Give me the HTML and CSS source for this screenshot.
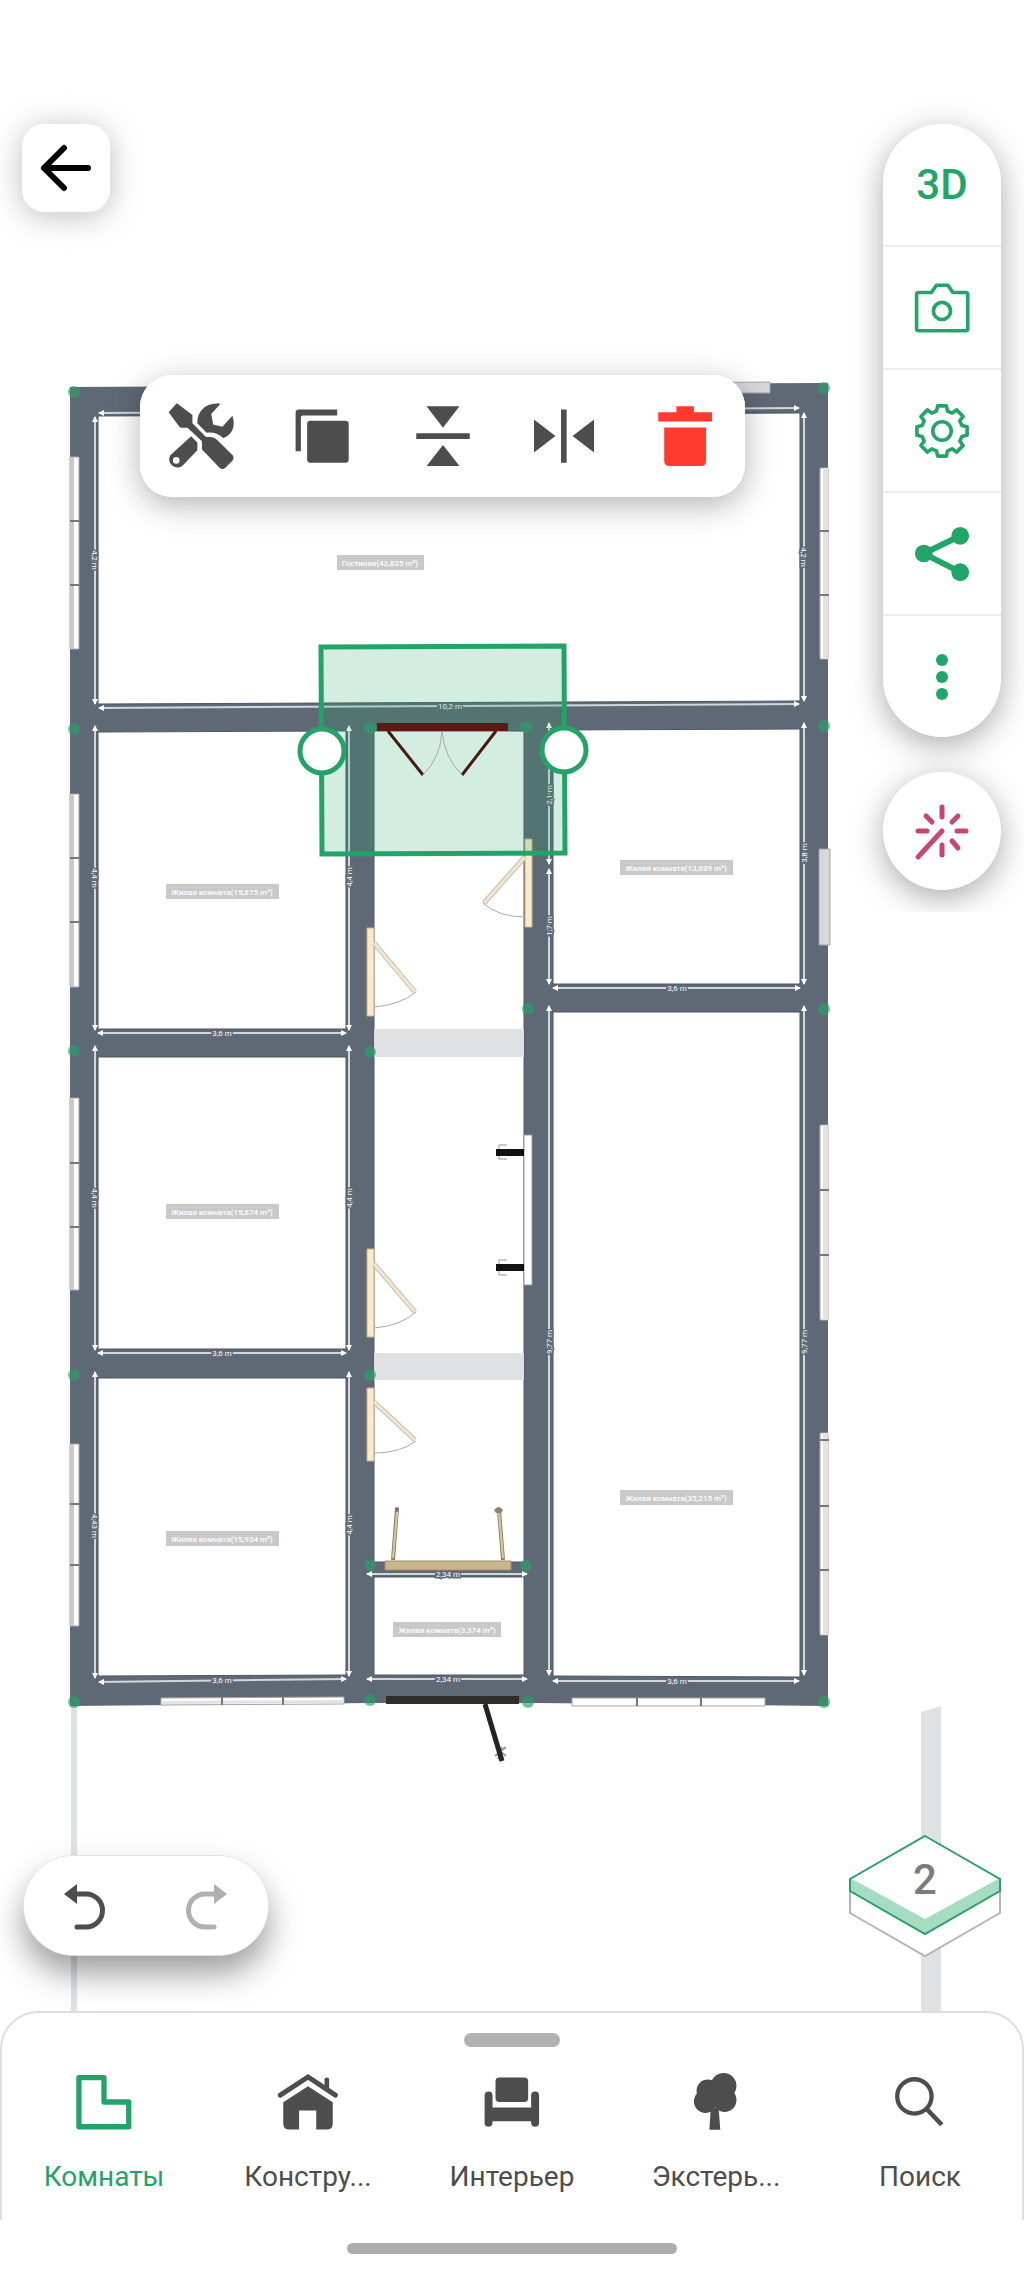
FILE: index.html
```html
<!doctype html>
<html lang="ru">
<head>
    <meta charset="utf-8"/>
    <meta name="viewport" content="width=device-width, initial-scale=1">
    <title>План этажа</title>
    <link rel="stylesheet" href="styles.css">
</head>
<body>

<div class="stage">
    <svg class="plan" viewBox="0 0 1024 2011" role="img" aria-label="План этажа">
        <defs>
            <marker id="arrow" viewBox="0 0 6 6" refX="5" refY="3" markerWidth="6" markerHeight="6" markerUnits="userSpaceOnUse" orient="auto-start-reverse">
                <path d="M0 0L6 3L0 6z" fill="#fff"/>
            </marker>
        </defs>

        <!-- lower floor -->
        <path class="ghost" d="M71 1700h6v311h-6zM921 1712l20-6v305h-20z"/>

        <!-- walls -->
        <path class="wall" d="M70 387L828 383V1706L537 1703H370L70 1706z"/>

        <!-- rooms -->
        <path class="room" d="M98 416L800 413V701L98 704z"/>
        <path class="room" d="M98 732L346 731V1029H98z"/>
        <path class="room" d="M98 1057H346V1349H98z"/>
        <path class="room" d="M98 1378H346V1675L98 1676z"/>
        <path class="room" d="M374 731H524V1562H374z"/>
        <path class="room" d="M374 1577H524V1675H374z"/>
        <path class="room" d="M553 730L800 729V984H553z"/>
        <path class="room" d="M553 1012H800V1677L553 1676z"/>
        <path class="ghost" d="M374 1029h150v28H374zM374 1353h150v27H374z"/>

        <!-- sizes -->
        <g class="dim">
            <path d="M99 413L799 408"/><path d="M95 417V704"/><path d="M804 413V701"/><path d="M99 708L799 704"/>
            <path d="M95 726V1030"/><path d="M349 726V1030"/><path d="M98 1033H346"/>
            <path d="M95 1046V1350"/><path d="M349 1046V1350"/><path d="M98 1353H346"/>
            <path d="M95 1372V1678"/><path d="M349 1372V1676"/><path d="M99 1682L346 1679"/>
            <path d="M549 723V864"/><path d="M549 869V984"/><path d="M804 723V984"/><path d="M553 988H800"/>
            <path d="M549 1006V1675"/><path d="M804 1006V1675"/><path d="M553 1681H799"/>
            <path d="M367 1574H527"/><path d="M367 1679H527"/>
        </g>
        <g class="dim-text">
            <text x="450" y="709">10,2 m</text>
            <text x="222" y="1036">3,6 m</text>
            <text x="222" y="1356">3,6 m</text>
            <text x="222" y="1683">3,6 m</text>
            <text x="677" y="991">3,6 m</text>
            <text x="677" y="1684">3,6 m</text>
            <text x="448" y="1577">2,34 m</text>
            <text x="448" y="1682">2,34 m</text>
            <text transform="translate(92 560) rotate(90)">4,2 m</text>
            <text transform="translate(801 557) rotate(90)">4,2 m</text>
            <text transform="translate(92 878) rotate(90)">4,4 m</text>
            <text transform="translate(352 877) rotate(-90)">4,4 m</text>
            <text transform="translate(92 1198) rotate(90)">4,4 m</text>
            <text transform="translate(352 1198) rotate(-90)">4,4 m</text>
            <text transform="translate(92 1526) rotate(90)">4,43 m</text>
            <text transform="translate(352 1525) rotate(-90)">4,4 m</text>
            <text transform="translate(552 795) rotate(-90)">2,1 m</text>
            <text transform="translate(552 926) rotate(-90)">1,7 m</text>
            <text transform="translate(807 853) rotate(-90)">3,8 m</text>
            <text transform="translate(552 1342) rotate(-90)">9,77 m</text>
            <text transform="translate(807 1342) rotate(-90)">9,77 m</text>
        </g>

        <!-- windows -->
        <g class="window">
            <path d="M70 457h9v192h-9zM70 794h9v193h-9zM70 1098h9v192h-9zM70 1444h9v182h-9z"/>
            <path d="M820 468h8v191h-8zM820 1125h8v195h-8zM820 1433h8v202h-8z"/>
            <path d="M161 1698l183-1v7l-183 1zM572 1698h193v8H572z"/>
        </g>
        <path class="pane" d="M70 457h4v192h-4zM70 794h4v193h-4zM70 1098h4v192h-4zM70 1444h4v182h-4z"/>
        <path class="pane-light" d="M823 468h5v191h-5zM823 1125h5v195h-5zM823 1433h5v202h-5zM161 1701l183-1v3l-183 1z"/>
        <path class="mullion" d="M70 521h9M70 585h9M70 858h9M70 922h9M70 1163h9M70 1227h9M70 1504h9M70 1565h9M820 531h9M820 595h9M820 1190h9M820 1255h9M820 1440h9M820 1506h9M820 1570h9M222 1697v8M283 1697v8M637 1698v8M701 1698v8"/>
        <path class="panel" d="M680 383l90-1v11h-90zM819 849h11v96h-11z"/>

        <!-- nodes -->
        <g class="node">
            <circle cx="74" cy="392" r="6"/><circle cx="824" cy="388" r="6"/>
            <circle cx="74" cy="729" r="6"/><circle cx="370" cy="728" r="6"/><circle cx="526" cy="727" r="6"/><circle cx="824" cy="726" r="6"/>
            <circle cx="74" cy="1051" r="6"/><circle cx="370" cy="1052" r="6"/>
            <circle cx="528" cy="1009" r="6"/><circle cx="824" cy="1009" r="6"/>
            <circle cx="74" cy="1375" r="6"/><circle cx="370" cy="1375" r="6"/>
            <circle cx="370" cy="1565" r="6"/><circle cx="526" cy="1566" r="6"/>
            <circle cx="74" cy="1702" r="6"/><circle cx="370" cy="1700" r="6"/><circle cx="528" cy="1702" r="6"/><circle cx="824" cy="1702" r="6"/>
        </g>

        <!-- inner doors -->
        <path class="door" d="M367 928h7v88h-7zM367 1249h7v88h-7zM367 1388h7v73h-7zM525 839h7v88h-7z"/>
        <path class="leaf-edge" d="M374 943l41 49M374 1264l41 48M374 1402l41 38M525 857l-41 46"/>
        <path class="leaf" d="M374 943l41 49M374 1264l41 48M374 1402l41 38M525 857l-41 46"/>
        <path class="swing" d="M416 992Q400 1005 374 1007M416 1312Q400 1326 374 1328M416 1441Q400 1453 374 1453M483 903Q498 917 525 917"/>

        <!-- wardrobe -->
        <path class="closet" d="M524 1135h8v150h-8z"/>
        <path class="bracket" d="M507 1145h-8v14h8M507 1260h-8v15h8"/>
        <path fill="#111" d="M496 1149h28v7h-28zM496 1264h28v7h-28z"/>

        <!-- porch doors -->
        <path d="M397 1508l-4 52M499 1510l4 50" stroke="#8f8468" stroke-width="4" fill="none"/>
        <path d="M397 1512l-4 46M499 1512l4 46" stroke="#d8c9a8" stroke-width="2" fill="none"/>
        <circle cx="397" cy="1509" r="2" fill="#777"/><path d="M494 1510q5-6 9 0l-2 3h-5z" fill="#8b8378"/>
        <path d="M385 1561h126v9H385z" fill="#cbb58a" stroke="#a08d68"/>
        <path d="M386 1696h133v8H386z" fill="#302d2b"/>
        <path d="M496 1748l10 8M506 1747l-11 9M498 1759l4-12" stroke="#999" stroke-width="2"/>
        <path d="M485 1704l17 57" stroke="#252321" stroke-width="5"/>

        <!-- selected door -->
        <path class="selection-fill" d="M321 647L564 646L565 853L322 854z"/>
        <path d="M377 723h131v8H377z" fill="#5b1a14"/>
        <path d="M388 731l35 44M496 731l-34 44" stroke="#4a1914" stroke-width="3"/>
        <path class="swing" d="M423 775Q441 757 442 731Q444 757 462 775"/>
        <path class="selection" d="M321 647L564 646L565 853L322 854z"/>
        <circle class="handle" cx="322" cy="751" r="22"/>
        <circle class="handle" cx="564" cy="750" r="22"/>

        <!-- room names -->
        <g class="tag">
            <rect x="337" y="555" width="87" height="15"/><text x="380" y="566">Гостиная(42,825 m²)</text>
            <rect x="166" y="884" width="113" height="15"/><text x="222" y="895">Жилая комната(15,875 m²)</text>
            <rect x="166" y="1204" width="113" height="15"/><text x="222" y="1215">Жилая комната(15,874 m²)</text>
            <rect x="166" y="1531" width="113" height="15"/><text x="222" y="1542">Жилая комната(15,934 m²)</text>
            <rect x="393" y="1622" width="108" height="15"/><text x="447" y="1633">Жилая комната(3,374 m²)</text>
            <rect x="620" y="860" width="113" height="15"/><text x="676" y="871">Жилая комната(13,689 m²)</text>
            <rect x="620" y="1490" width="113" height="15"/><text x="676" y="1501">Жилая комната(35,215 m²)</text>
        </g>
    </svg>

    <button class="back" type="button" aria-label="Назад">
        <svg width="66" height="66" viewBox="33 135 66 66" fill="none" stroke="#000" stroke-width="6" stroke-linecap="round" stroke-linejoin="round"><path d="M88 168H44M64 148L44 168L64 188"/></svg>
    </button>

    <div class="toolbar">
        <button type="button" aria-label="Настроить">
            <svg class="icon" viewBox="503 907 200 200">
                <path d="M528 909Q531 907 536 912L577 943V968L618 1010H634Q645 1012 652 1019L699 1065Q705 1073 698 1082L677 1103Q668 1110 660 1104L606 1048V1023L562 982H545Q540 982 537 978L505 935z"/>
                <path d="M662 909L634 940L640 972L668 979L698 946C710 980 695 1005 670 1013C655 1000 640 995 620 997L592 968C590 935 615 903 662 909z"/>
                <path fill-rule="evenodd" d="M573 1008L592 1027V1050L546 1098A25 25 0 0 1 510 1065zM538 1081A10 10 0 1 0 518 1081A10 10 0 1 0 538 1081z"/>
            </svg>
        </button>
        <button type="button" aria-label="Копировать">
            <svg class="icon" viewBox="866 907 200 200"><path d="M886 1053V937Q886 927 896 927H1012V945H908Q902 945 902 951V1053z"/><rect x="921" y="961" width="126" height="127" rx="10"/></svg>
        </button>
        <button type="button" aria-label="Отразить по вертикали">
            <svg class="icon" viewBox="1230 907 200 200"><path d="M1280 917h100l-50 65zM1249 999h162v17h-162zM1330 1034l50 64h-100z"/></svg>
        </button>
        <button type="button" aria-label="Отразить по горизонтали">
            <svg class="icon" viewBox="57 907 200 200"><path d="M66 957l65 50l-65 50zM148 927h17v161h-17zM248 957v100l-65-50z"/></svg>
        </button>
        <button class="danger" type="button" aria-label="Удалить">
            <svg class="icon" viewBox="420 907 200 200"><path d="M439 935h55v-18h53v18h55v28H439zM457 981h127v101q0 16-16 16h-95q-16 0-16-16z"/></svg>
        </button>
    </div>

    <div class="side">
        <div class="side-menu">
            <button class="mode" type="button">3D</button>
            <button type="button" aria-label="Снимок">
                <svg class="icon line" viewBox="1188 522 200 200"><path stroke-width="11" d="M1211 581q0-6 6-6h39l15-22h35l15 22h39q6 0 6 6v104q0 6-6 6h-143q-6 0-6-6z"/><circle cx="1288" cy="631" r="26" stroke-width="11"/></svg>
            </button>
            <button type="button" aria-label="Параметры">
                <svg class="icon line" viewBox="-100 -100 200 200"><path stroke-width="11" d="M-13-76H13L17-60L31-54L44-64L64-44L54-31L60-17L76-13V13L60 17L54 31L64 44L44 64L31 54L17 60L13 76H-13L-17 60L-31 54L-44 64L-64 44L-54 31L-60 17L-76 13V-13L-60-17L-54-31L-64-44L-44-64L-31-54L-17-60z"/><circle r="28" stroke-width="11"/></svg>
            </button>
            <button type="button" aria-label="Поделиться">
                <svg class="icon" viewBox="908 520 67 67"><path d="M960 535L923 553L960 572" fill="none" stroke="currentColor" stroke-width="6"/><circle cx="960" cy="535" r="9"/><circle cx="923" cy="553" r="9"/><circle cx="960" cy="572" r="9"/></svg>
            </button>
            <button type="button" aria-label="Ещё">
                <svg class="icon" viewBox="0 0 66 66"><circle cx="33" cy="16" r="6"/><circle cx="33" cy="33" r="6"/><circle cx="33" cy="50" r="6"/></svg>
            </button>
        </div>
        <button class="magic" type="button" aria-label="Магия">
            <svg class="icon line" viewBox="909 797 66 66"><path stroke-width="5" stroke-linecap="round" d="M942 806v10M918 830h9M957 830h9M926 815l6 6M958 815l-6 6M952 840l6 7M942 844v10M942 830L918 856"/></svg>
        </button>
    </div>

    <div class="history">
        <button type="button" aria-label="Отменить">
            <svg width="66" height="66" viewBox="52 1872 66 66" fill="#4d4d4d"><path d="M64 1893l13-10v20z"/><path d="M76 1893h10a16 16 0 0 1 0 33h-9" fill="none" stroke="#4d4d4d" stroke-width="5" stroke-linecap="round"/></svg>
        </button>
        <button type="button" aria-label="Повторить" disabled>
            <svg width="66" height="66" viewBox="175 1872 66 66" fill="#b0b0b0"><path d="M228 1893l-13-10v20z"/><path d="M216 1893h-10a16 16 0 0 0 0 33h9" fill="none" stroke="#b0b0b0" stroke-width="5" stroke-linecap="round"/></svg>
        </button>
    </div>

    <button class="floor" type="button" aria-label="Этаж 2">
        <svg width="154" height="124" viewBox="848 1834 154 124">
            <path d="M850 1880V1913L925 1956L1000 1913V1880L925 1920z" fill="#fff" stroke="#b5b5b5" stroke-width="2"/>
            <path d="M925 1836L1000 1879V1891L925 1934L850 1891V1879z" fill="#a6dcc2"/>
            <path d="M925 1836L998 1879L925 1919L852 1879z" fill="#fff"/>
            <path d="M925 1836L1000 1879V1891L925 1934L850 1891V1879z" fill="none" stroke="#2a9f6a" stroke-width="2"/>
        </svg>
        <span>2</span>
    </button>
</div>

<nav class="sheet">
    <div class="grip"></div>
    <div class="tabs">
        <button class="tab active" type="button">
            <svg class="icon line" viewBox="206 807 200 200"><path stroke-width="16" d="M230 833h76v74h75v75h-151z"/></svg>
            <span>Комнаты</span>
        </button>
        <button class="tab" type="button">
            <svg class="icon" viewBox="820 807 200 200"><path d="M970 838q0-5 7-5t7 5v38l-14-9z"/><path d="M836 886L920 831L1003 886" fill="none" stroke="currentColor" stroke-width="15" stroke-linecap="round"/><path d="M920 859L995 908V974Q995 990 979 990H945V933H893V990H861Q845 990 845 974V908z"/></svg>
            <span>Констру...</span>
        </button>
        <button class="tab" type="button">
            <svg class="icon" viewBox="1434 807 200 200"><rect x="1484" y="833" width="99" height="74" rx="12"/><rect x="1451" y="875" width="24" height="107" rx="12"/><rect x="1592" y="875" width="24" height="107" rx="12"/><path d="M1460 924h147v41h-147z"/></svg>
            <span>Интерьер</span>
        </button>
        <button class="tab" type="button">
            <svg class="icon" viewBox="515 267 200 200"><circle cx="638" cy="318" r="39"/><circle cx="590" cy="333" r="34"/><circle cx="583" cy="365" r="35"/><circle cx="641" cy="361" r="36"/><path d="M599 385h24l5 66h-33z"/></svg>
            <span>Экстерь...</span>
        </button>
        <button class="tab" type="button">
            <svg class="icon line" viewBox="1129 267 200 200"><circle cx="1212" cy="350" r="52" stroke-width="13"/><path d="M1250 389l45 47" stroke-width="14"/></svg>
            <span>Поиск</span>
        </button>
    </div>
</nav>
<div class="home-bar"></div>

</body>
</html>
```
FILE: styles.css
```css
* {
    box-sizing: border-box;
}

body {
    margin: 0;
    background: #fff;
    font-family: Roboto, "Noto Sans", sans-serif;
    color: #4d4d4d;
}

button {
    display: flex;
    align-items: center;
    justify-content: center;
    margin: 0;
    padding: 0;
    border: 0;
    background: #fff;
    font: inherit;
    color: inherit;
    cursor: pointer;
}

svg {
    display: block;
}

.icon {
    width: 66px;
    height: 66px;
    fill: currentColor;
}

.line {
    fill: none;
    stroke: currentColor;
    stroke-linejoin: round;
}

/* plan */
.stage {
    position: relative;
    overflow: hidden;
}

.plan {
    width: 100%;
    height: auto;
}

.ghost {
    fill: #dfe1e3;
}

.wall {
    fill: #5f6875;
}

.room {
    fill: #fff;
    stroke: #4e5967;
    stroke-width: 1;
}

.dim path {
    stroke: #d3d7dc;
    stroke-width: 2;
    marker-start: url(#arrow);
    marker-end: url(#arrow);
}

.dim-text text {
    font-size: 8px;
    fill: #fff;
    stroke: #5f6875;
    stroke-width: 3px;
    paint-order: stroke;
    text-anchor: middle;
}

.window {
    fill: #fff;
    stroke: #a5a5a8;
    stroke-width: 1;
}

.pane {
    fill: #c9c9c9;
}

.pane-light {
    fill: #e4e1e3;
}

.mullion {
    stroke: #777;
    stroke-width: 2;
}

.panel {
    fill: #d8d7d9;
    stroke: #a3a3a6;
}

.node {
    fill: #2a9f6a;
    opacity: 0.65;
}

.door {
    fill: #fbe9c8;
    stroke: #c4b390;
}

.leaf-edge {
    stroke: #c9bda6;
    stroke-width: 5;
}

.leaf {
    stroke: #efe6d6;
    stroke-width: 3;
}

.swing {
    fill: none;
    stroke: #a8aaa8;
    stroke-width: 1;
}

.closet {
    fill: #fff;
    stroke: #999;
}

.bracket {
    fill: none;
    stroke: #999;
    stroke-width: 1;
}

.selection-fill {
    fill: #22a568;
    fill-opacity: 0.2;
}

.selection {
    fill: none;
    stroke: #24a369;
    stroke-width: 5;
}

.handle {
    fill: #fff;
    stroke: #24a369;
    stroke-width: 5;
}

.tag rect {
    fill: #c9c9c9;
}

.tag text {
    font-size: 8px;
    font-weight: 500;
    fill: #fff;
    text-anchor: middle;
}

/* controls over the plan */
.back {
    position: absolute;
    top: 124px;
    left: 22px;
    width: 88px;
    height: 88px;
    border-radius: 22px;
    box-shadow: 0 4px 32px rgba(0, 0, 0, 0.26);
}

.toolbar {
    position: absolute;
    top: 375px;
    left: 140px;
    display: flex;
    height: 122px;
    border-radius: 32px;
    background: #fff;
    box-shadow: 0 8px 32px rgba(0, 0, 0, 0.3);
}

.toolbar button {
    width: 121px;
    border-radius: 32px;
}

.toolbar .danger {
    color: #ff3b30;
}

.side {
    position: absolute;
    top: 84px;
    right: 0;
    padding: 40px 23px 22px 40px;
    overflow: hidden;
}

.side-menu {
    display: flex;
    flex-direction: column;
    gap: 2px;
    width: 118px;
    border-radius: 59px;
    background: #ececec;
    overflow: hidden;
    color: #22a568;
}

.side-menu,
.magic {
    box-shadow: 0 8px 32px rgba(0, 0, 0, 0.34);
}

.side-menu button {
    height: 121px;
}

.side-menu .mode {
    font-size: 42px;
    font-weight: 500;
}

.magic {
    width: 118px;
    height: 118px;
    margin-top: 35px;
    border-radius: 50%;
    color: #c94673;
}

.history {
    position: absolute;
    bottom: 55px;
    left: 23px;
    display: flex;
    width: 246px;
    height: 101px;
    border: 1px solid #e2e2e2;
    border-radius: 51px;
    background: #fff;
    box-shadow: 0 18px 32px rgba(0, 0, 0, 0.38);
}

.history button {
    flex: 1;
    border-radius: 51px;
}

.floor {
    position: absolute;
    right: 22px;
    bottom: 53px;
    background: none;
}

.floor span {
    position: absolute;
    top: 22px;
    width: 100%;
    font-size: 42px;
    font-weight: 500;
    line-height: 48px;
    text-align: center;
    color: #7c7c7c;
}

/* bottom sheet */
.sheet {
    padding: 20px 0 27px;
    border: 2px solid #dedede;
    border-bottom: 0;
    border-radius: 38px 38px 0 0;
    background: #fff;
}

.grip {
    width: 96px;
    height: 14px;
    margin: 0 auto;
    border-radius: 7px;
    background: #b2b2b2;
}

.tabs {
    display: flex;
    margin-top: 22px;
}

.tab {
    flex: 1;
    flex-direction: column;
    gap: 26px;
    min-width: 0;
    background: none;
    font-size: 28px;
    line-height: 32px;
}

.tab.active {
    color: #24a369;
}

.home-bar {
    width: 330px;
    height: 11px;
    margin: 23px auto 22px;
    border-radius: 6px;
    background: #acacac;
}
```
